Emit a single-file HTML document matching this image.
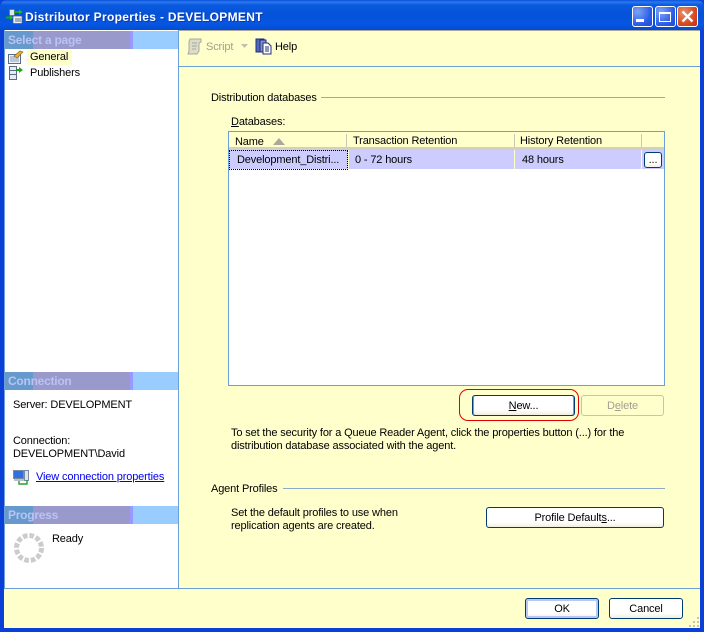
<!DOCTYPE html>
<html><head><meta charset="utf-8"><style>
html,body{margin:0;padding:0;width:704px;height:632px;overflow:hidden;background:#0a3fd8}
*{box-sizing:border-box}
body{font-family:"Liberation Sans",sans-serif;font-size:11px;color:#000;position:relative;letter-spacing:-.14px}
.a{position:absolute;white-space:nowrap;line-height:13px}
.r{position:absolute}
.hd{position:absolute;left:5px;width:173px;height:18px;background:linear-gradient(to right,#6699cc 0,#6699cc 28px,#9999cc 28px,#9999cc 125px,#9999ff 125px,#9999ff 128px,#99ccff 128px);color:#b9c4f4;font-weight:bold;font-size:12px;line-height:18px;padding-left:3px;letter-spacing:-.25px}
.btn{position:absolute;background:linear-gradient(#fff 0,#fff 75%,#efeedd 100%);border:1px solid #003c74;border-radius:3px;text-align:center;line-height:21px;font-size:11px}
.tb{position:absolute;width:21px;height:21px;top:6px;border:1px solid #fff;border-radius:3px;background:radial-gradient(circle at 25% 25%,#7fa3f5,#2a5be8 65%,#2148d0)}
</style></head><body>
<!-- title bar -->
<div class="r" style="left:0;top:0;width:704px;height:30px;border-radius:7px 7px 0 0;background:linear-gradient(#0a4fd8 0,#2a78f0 2px,#0a5ae0 5px,#0452d8 14px,#0656e4 24px,#034cd0 30px)"></div>
<svg class="r" style="left:6px;top:9px" width="17" height="15" viewBox="0 0 17 15">
<rect x="3.500" y=".5" width="5" height="6" fill="#dfe8f4" stroke="#5a6b80" stroke-width=".7"/><rect x="7" y="7" width="9" height="7.500" fill="#eef2f8" stroke="#4a5a70" stroke-width=".7"/>
<path d="M9 10h6M9 12h6" stroke="#5a6b80"/><path d="M8 3h6" stroke="#18a818" stroke-width="2"/><path d="M13 .5l3.500 2.500L13 5.500z" fill="#18c018"/><path d="M0 8.500h5" stroke="#18a818" stroke-width="2"/><path d="M4 6l3 2.500L4 11z" fill="#18c018"/></svg>
<div class="a" style="left:25px;top:10px;color:#fff;font-weight:bold;font-size:12px;line-height:15px;text-shadow:1px 1px #0b3aa8;letter-spacing:.33px">Distributor Properties - DEVELOPMENT</div>
<div class="tb" style="left:632px"><div class="r" style="left:3px;top:12px;width:8px;height:3px;background:#fff"></div></div>
<div class="tb" style="left:655px"><div class="r" style="left:3px;top:5px;width:12px;height:10px;border:1px solid #fff;border-top:2px solid #fff"></div></div>
<div class="tb" style="left:677px;background:radial-gradient(circle at 30% 30%,#e89070,#d84a20 60%,#c03010)"><svg class="r" style="left:3px;top:3px" width="13" height="13" viewBox="0 0 13 13"><path d="M1.500 1.500l10 10M11.500 1.500l-10 10" stroke="#fff" stroke-width="2.300"/></svg></div>
<!-- client -->
<div class="r" style="left:4px;top:30px;width:696px;height:598px;background:#ffffcc"></div>
<div class="r" style="left:4px;top:30px;width:175px;height:559px;background:#fff;border-right:1px solid #6a9fd8;border-bottom:1px solid #6a9fd8;border-left:1px solid #6a9fd8"></div>
<div class="r" style="left:4px;top:588px;width:696px;height:1px;background:#6a9fd8"></div>
<div class="r" style="left:179px;top:30px;width:521px;height:1px;background:#aca899"></div>
<div class="r" style="left:179px;top:66px;width:521px;height:1px;background:#6a9fd8"></div>
<!-- left -->
<div class="hd" style="top:31px">Select a page</div>
<div class="r" style="left:27px;top:50px;width:45px;height:15px;background:#ffffcc"></div>
<svg class="r" style="left:8px;top:50px" width="16" height="14" viewBox="0 0 16 14"><rect x=".5" y="4.500" width="12" height="9" fill="#eef3fa" stroke="#5a6a8a"/><path d="M2 7h9M2 9h9M2 11h9" stroke="#8a9ab8"/><path d="M6 6l6-5 3 1-6 6z" fill="#e8b030" stroke="#806010" stroke-width=".6"/></svg>
<div class="a" style="left:30px;top:51px">General</div>
<svg class="r" style="left:9px;top:66px" width="14" height="14" viewBox="0 0 14 14"><rect x=".5" y=".5" width="7" height="13" fill="#e4ecf6" stroke="#5a6a80"/><path d="M1 4.500h6M1 8.500h6" stroke="#5a6a80"/><path d="M7 4h4" stroke="#18a018" stroke-width="2"/><path d="M10 1l4 3-4 3z" fill="#18b018"/></svg>
<div class="a" style="left:30px;top:67px">Publishers</div>
<div class="hd" style="top:372px">Connection</div>
<div class="a" style="left:13px;top:399px">Server: DEVELOPMENT</div>
<div class="a" style="left:13px;top:435px">Connection:</div>
<div class="a" style="left:13px;top:448px">DEVELOPMENT\David</div>
<svg class="r" style="left:13px;top:470px" width="17" height="15" viewBox="0 0 17 15"><rect x=".5" y=".5" width="10" height="8" fill="#2f6fe0" stroke="#7a8aa0"/><rect x="1" y="9" width="10" height="2" fill="#b8c0cc"/><rect x="11.500" y=".5" width="4" height="10" fill="#dde4ee" stroke="#7a8aa0"/><path d="M6 11v3h8v-4" fill="none" stroke="#28a028" stroke-width="1.400"/></svg>
<div class="a" style="left:36px;top:471px;color:#0000ee;text-decoration:underline">View connection properties</div>
<div class="hd" style="top:506px">Progress</div>
<svg class="r" style="left:14px;top:533px" width="31" height="31" viewBox="0 0 31 31"><circle cx="15" cy="15" r="12.500" fill="none" stroke="#cccccc" stroke-width="5" stroke-dasharray="4.600 1.945"/></svg>
<div class="a" style="left:52px;top:533px">Ready</div>
<!-- toolbar -->
<svg class="r" style="left:186px;top:38px" width="17" height="17" viewBox="0 0 17 17"><path d="M4 1h11v3l-2 1v8l-2 3H2l1-3V4z" fill="#dcdcc8" stroke="#a8a8a0"/><path d="M6 5h5M6 8h5M6 11h4" stroke="#a8a8a0"/></svg>
<div class="a" style="left:206px;top:41px;color:#a0a090">Script</div>
<svg class="r" style="left:241px;top:44px" width="7" height="5"><path d="M0 0h7L3.500 4z" fill="#c0c0b0"/></svg>
<svg class="r" style="left:255px;top:38px" width="17" height="17" viewBox="0 0 17 17"><rect x="1" y="1" width="8" height="13" fill="#5068b8" stroke="#202c78"/><rect x="5" y="2" width="6" height="12" fill="#8090d0" stroke="#202c78"/><path d="M8 5h5l3 3v8H8z" fill="#fff" stroke="#202c78"/><path d="M10 9h4M10 11h4M10 13h4" stroke="#202c78"/></svg>
<div class="a" style="left:275px;top:41px">Help</div>
<!-- group -->
<div class="a" style="left:211px;top:92px">Distribution databases</div>
<div class="r" style="left:321px;top:97px;width:344px;height:1px;background:#8fa8c8"></div>
<div class="a" style="left:231px;top:116px"><u>D</u>atabases:</div>
<!-- grid -->
<div class="r" style="left:228px;top:131px;width:437px;height:255px;background:#fff;border:1px solid #6a9fd8"></div>
<div class="r" style="left:229px;top:132px;width:435px;height:17px;background:#ffffcc"></div>
<div class="r" style="left:229px;top:147px;width:435px;height:3px;background:#d4d0bc"></div>
<div class="r" style="left:346px;top:134px;width:1px;height:13px;background:#c8c8b0"></div>
<div class="r" style="left:514px;top:134px;width:1px;height:13px;background:#c8c8b0"></div>
<div class="r" style="left:641px;top:134px;width:1px;height:13px;background:#c8c8b0"></div>
<div class="a" style="left:235px;top:136px">Name</div>
<svg class="r" style="left:273px;top:138px" width="13" height="7"><path d="M0 7L6 0l6 7z" fill="#aca899"/></svg>
<div class="a" style="left:353px;top:135px">Transaction Retention</div>
<div class="a" style="left:520px;top:135px">History Retention</div>
<div class="r" style="left:229px;top:150px;width:412px;height:19px;background:#ccccff"></div>
<div class="r" style="left:229px;top:150px;width:119px;height:20px;border:1px dotted #000"></div>
<div class="r" style="left:514px;top:150px;width:1px;height:19px;background:#ffffcc"></div>
<div class="r" style="left:348px;top:150px;width:1px;height:19px;background:#ffffcc"></div>
<div class="r" style="left:641px;top:150px;width:1px;height:19px;background:#ffffcc"></div>
<div class="r" style="left:642px;top:150px;width:22px;height:19px;background:#ccccff"></div>
<div class="a" style="left:237px;top:154px">Development_Distri...</div>
<div class="a" style="left:355px;top:154px">0 - 72 hours</div>
<div class="a" style="left:522px;top:154px">48 hours</div>
<div class="btn" style="left:644px;top:152px;width:18px;height:16px;line-height:15px">...</div>
<!-- buttons -->
<div class="r" style="left:459px;top:389px;width:120px;height:32px;border:1px solid #e00000;border-radius:9px"></div>
<div class="btn" style="left:472px;top:395px;width:103px;height:21px;box-shadow:inset 1px 0 #7a9cc8,inset -1px 0 #7a9cc8"><u>N</u>ew...</div>
<div class="btn" style="left:581px;top:395px;width:83px;height:21px;background:#ffffcc;border-color:#c4c4b4;color:#a0a090">D<u>e</u>lete</div>
<div class="a" style="left:231px;top:427px">To set the security for a Queue Reader Agent, click the properties button (...) for the</div>
<div class="a" style="left:231px;top:440px">distribution database associated with the agent.</div>
<div class="a" style="left:211px;top:483px">Agent Profiles</div>
<div class="r" style="left:283px;top:488px;width:382px;height:1px;background:#8fa8c8"></div>
<div class="a" style="left:231px;top:507px">Set the default profiles to use when</div>
<div class="a" style="left:231px;top:520px">replication agents are created.</div>
<div class="btn" style="left:486px;top:507px;width:178px;height:21px">Profile Default<u>s</u>...</div>
<div class="btn" style="left:525px;top:598px;width:74px;height:21px;box-shadow:inset 0 0 0 2px #b8c8f0">OK</div>
<div class="btn" style="left:609px;top:598px;width:74px;height:21px">Cancel</div>
<svg class="r" style="left:688px;top:616px" width="12" height="12" fill="#c4c4b0"><rect x="9" y="1" width="2" height="2"/><rect x="5" y="5" width="2" height="2"/><rect x="9" y="5" width="2" height="2"/><rect x="1" y="9" width="2" height="2"/><rect x="5" y="9" width="2" height="2"/><rect x="9" y="9" width="2" height="2"/></svg>
</body></html>
